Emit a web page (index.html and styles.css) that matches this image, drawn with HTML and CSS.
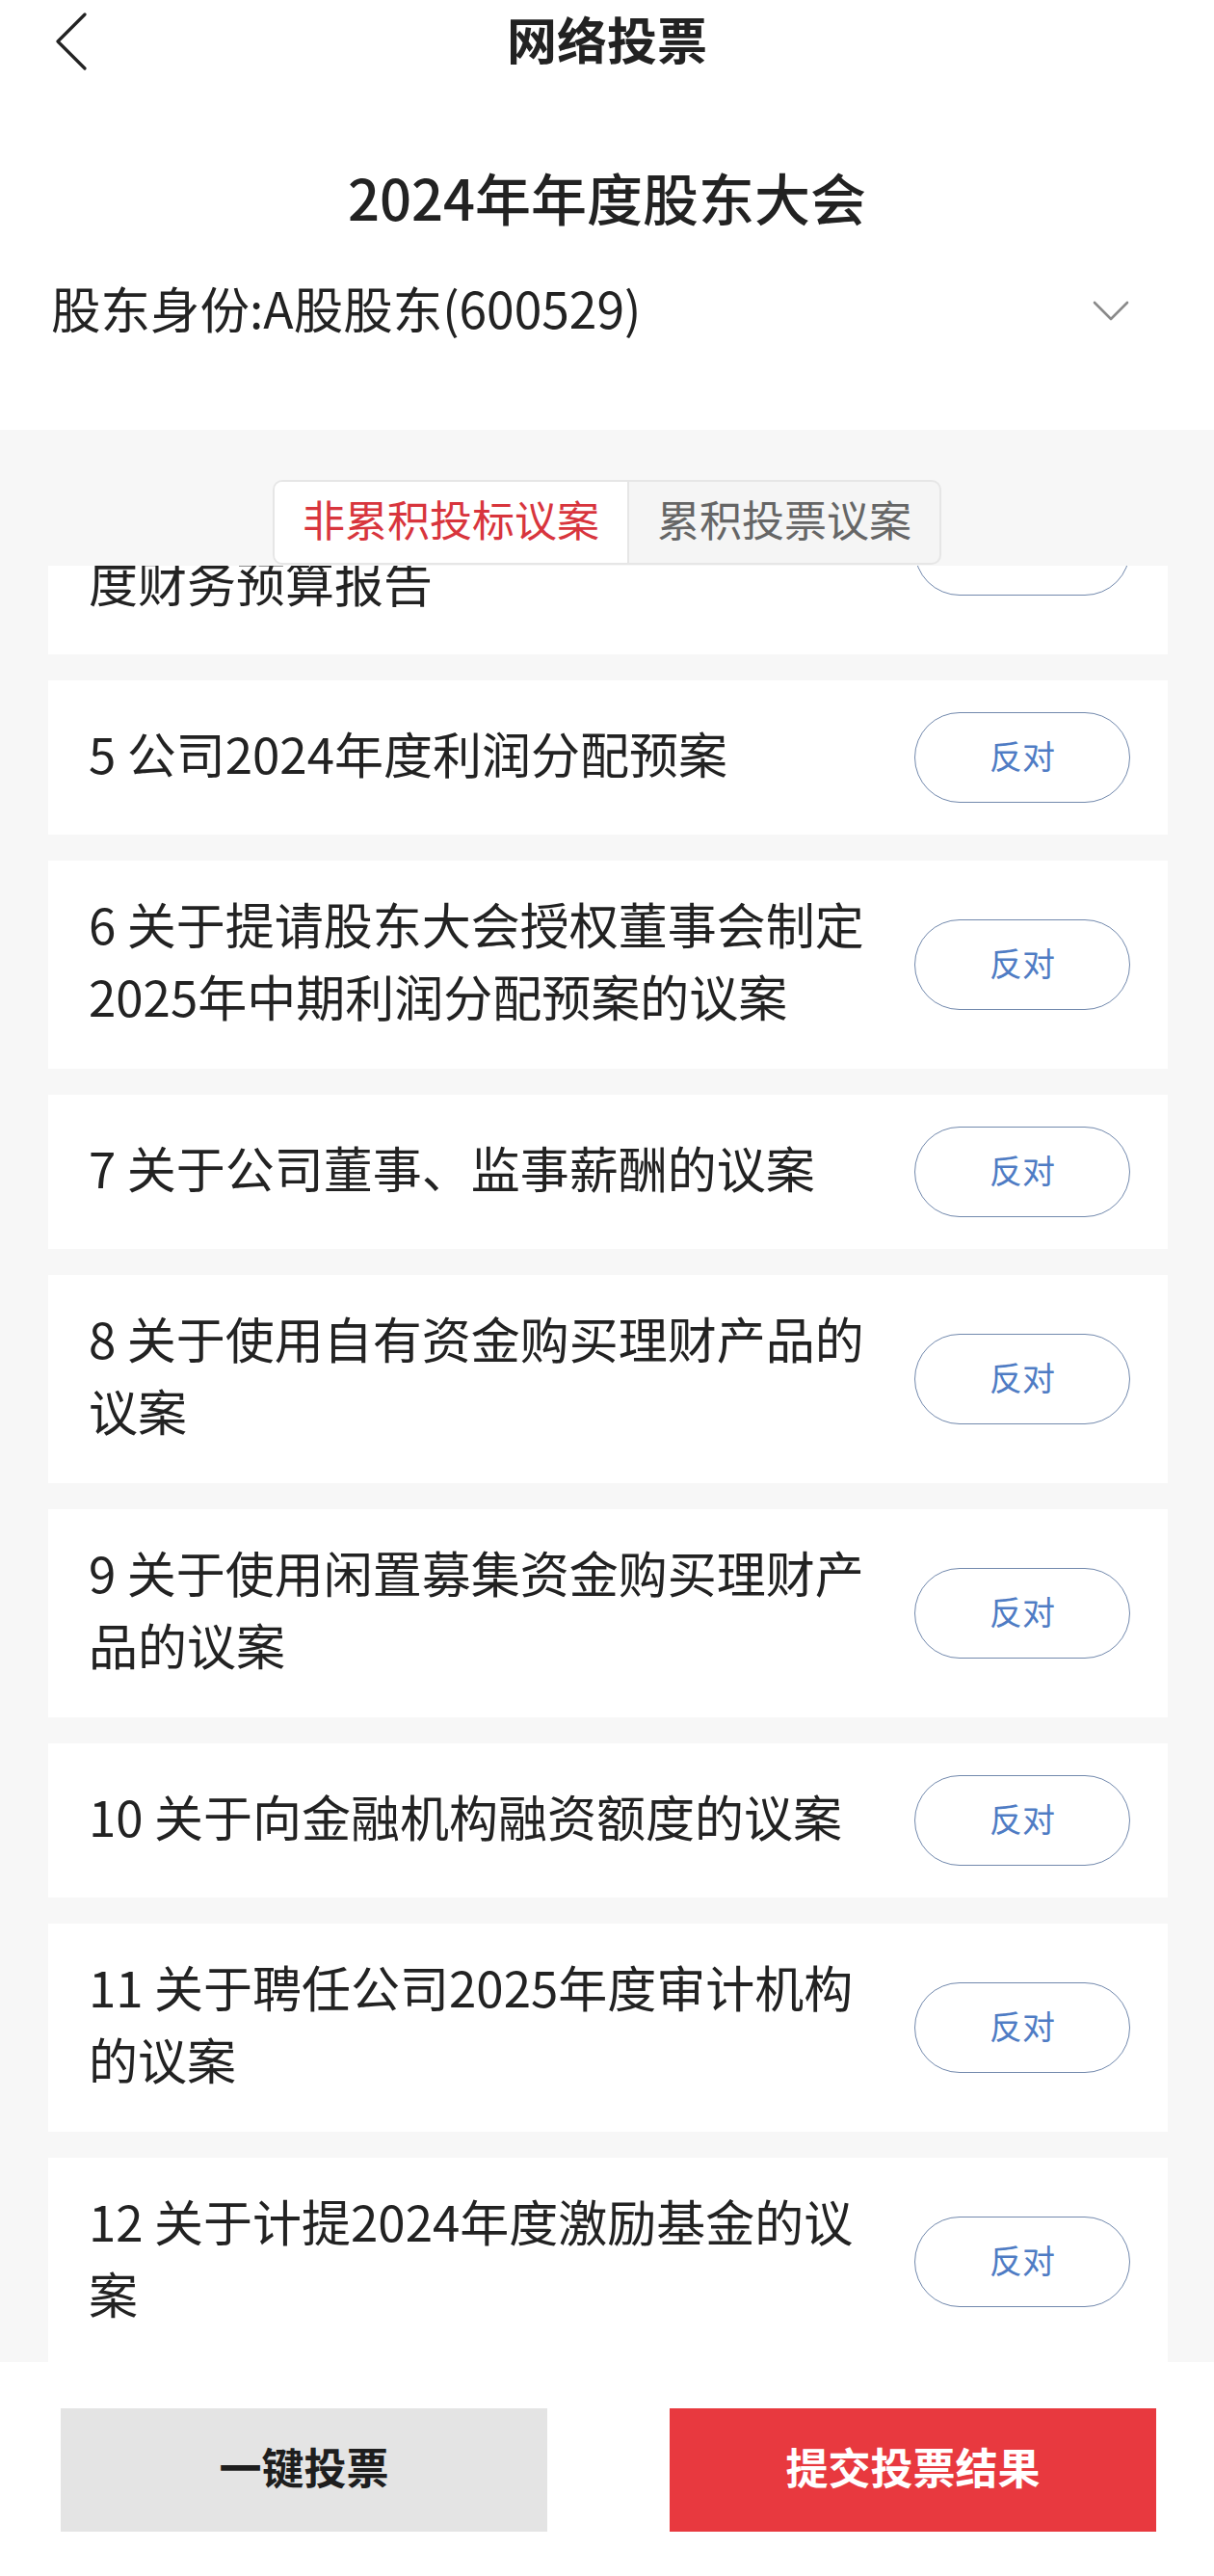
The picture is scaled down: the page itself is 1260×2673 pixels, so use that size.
FILE: index.html
```html
<!DOCTYPE html>
<html lang="zh-CN">
<head>
<meta charset="utf-8">
<title>网络投票</title>
<link rel="stylesheet" href="styles.css">
</head>
<body>
<div class="page">
  <header class="navbar">
    <div class="nav-left">
      <svg class="back" width="40" height="64" viewBox="0 0 40 64" fill="none">
        <path d="M32 6 L4 34 L32 62" stroke="#222" stroke-width="3.2" stroke-linecap="round" stroke-linejoin="round"/>
      </svg>
    </div>
    <h1 class="nav-title">网络投票</h1>
    <div class="nav-right"></div>
  </header>

  <section class="info">
    <h2 class="meeting-title">2024年年度股东大会</h2>
    <div class="identity">
      <span class="identity-text">股东身份:A股股东(600529)</span>
      <svg class="drop" width="40" height="24" viewBox="0 0 40 24" fill="none">
        <path d="M3 3 L20 20 L37 3" stroke="#8a8a8a" stroke-width="2.6" stroke-linecap="round" stroke-linejoin="round"/>
      </svg>
    </div>
  </section>

  <div class="tabs-bar">
    <div class="tabs">
      <div class="tab active">非累积投标议案</div>
      <div class="tab">累积投票议案</div>
    </div>
  </div>

  <div class="list">
    <div class="list-inner">
      <div class="card"><div class="card-text">4 公司2024年度财务决算及2025年<br>度财务预算报告</div><button class="vote">反对</button></div>
      <div class="card"><div class="card-text">5 公司2024年度利润分配预案</div><button class="vote">反对</button></div>
      <div class="card"><div class="card-text">6 关于提请股东大会授权董事会制定2025年中期利润分配预案的议案</div><button class="vote">反对</button></div>
      <div class="card"><div class="card-text">7 关于公司董事、监事薪酬的议案</div><button class="vote">反对</button></div>
      <div class="card"><div class="card-text">8 关于使用自有资金购买理财产品的议案</div><button class="vote">反对</button></div>
      <div class="card"><div class="card-text">9 关于使用闲置募集资金购买理财产品的议案</div><button class="vote">反对</button></div>
      <div class="card"><div class="card-text">10 关于向金融机构融资额度的议案</div><button class="vote">反对</button></div>
      <div class="card"><div class="card-text">11 关于聘任公司2025年度审计机构的议案</div><button class="vote">反对</button></div>
      <div class="card"><div class="card-text">12 关于计提2024年度激励基金的议案</div><button class="vote">反对</button></div>
    </div>
  </div>

  <footer class="footer">
    <button class="btn btn-gray">一键投票</button>
    <button class="btn btn-red">提交投票结果</button>
  </footer>
</div>
</body>
</html>
```

FILE: styles.css
```css
* { box-sizing: border-box; }
html, body {
  margin: 0;
  padding: 0;
}
body {
  width: 1260px;
  height: 2673px;
  overflow: hidden;
  background: #fff;
  font-family: "Noto Sans CJK SC", "Noto Sans", sans-serif;
  color: #222;
}
.page {
  display: flex;
  flex-direction: column;
  height: 2673px;
}
.navbar {
  height: 88px;
  display: grid;
  grid-template-columns: 1fr auto 1fr;
  align-items: center;
  flex-shrink: 0;
}
.nav-left {
  padding-left: 56px;
  display: flex;
  align-items: center;
}
.back { display: block; margin-top: -6px; }
.nav-title {
  margin: 0 0 8px;
  font-size: 52px;
  font-weight: 700;
  line-height: 80px;
  color: #222;
}
.info {
  flex-shrink: 0;
  padding-bottom: 92px;
}
.meeting-title {
  margin: 76px 0 0;
  height: 80px;
  line-height: 80px;
  font-size: 58px;
  font-weight: 500;
  text-align: center;
  color: #222;
}
.identity {
  margin-top: 40px;
  height: 70px;
  display: flex;
  align-items: center;
  justify-content: space-between;
  padding: 0 87px 0 53px;
}
.identity-text {
  font-size: 51.5px;
  line-height: 70px;
  color: #222;
}
.drop { display: block; margin-top: 8px; }

.tabs-bar {
  flex-shrink: 0;
  height: 141px;
  background: #f7f7f7;
  padding-top: 52px;
  display: flex;
  justify-content: center;
  align-items: flex-start;
}
.tabs {
  display: flex;
  height: 88px;
  border: 2px solid #e6e6e6;
  border-radius: 10px;
  overflow: hidden;
  background: #f5f5f5;
}
.tab {
  padding: 0 29px 8px;
  font-size: 44px;
  line-height: 76px;
  color: #666;
}
.tab.active {
  background: #fff;
  color: #d8353d;
  border-right: 2px solid #e6e6e6;
}

.list {
  flex: 1;
  min-height: 0;
  overflow: hidden;
  background: #f7f7f7;
  padding: 0 48px 0 50px;
}
.list-inner {
  display: flex;
  flex-direction: column;
  gap: 27px;
  margin-top: -124px;
}
.card {
  background: #fff;
  display: flex;
  align-items: center;
  padding: 33px 39px 33px 42px;
}
.card-text {
  width: 817px;
  margin: -5px 0 5px;
  font-size: 51px;
  line-height: 75px;
  color: #222;
}
.vote {
  margin-left: auto;
  flex-shrink: 0;
  width: 224px;
  height: 94px;
  border: 1.5px solid #7289ad;
  border-radius: 47px;
  background: #fff;
  color: #4f7cc4;
  font-family: "Noto Sans CJK SC", sans-serif;
  font-size: 34px;
  padding: 0 0 6px;
}

.footer {
  flex-shrink: 0;
  height: 222px;
  background: #fff;
  display: flex;
  justify-content: space-between;
  align-items: flex-start;
  padding: 48px 60px 0 63px;
}
.btn {
  width: 505px;
  height: 128px;
  border: none;
  border-radius: 0;
  font-family: "Noto Sans CJK SC", sans-serif;
  font-size: 44px;
  font-weight: 700;
  padding: 0 0 9px;
}
.btn-gray {
  background: #e4e4e4;
  color: #1e1e1e;
}
.btn-red {
  background: #e8393f;
  color: #fff;
}
```
